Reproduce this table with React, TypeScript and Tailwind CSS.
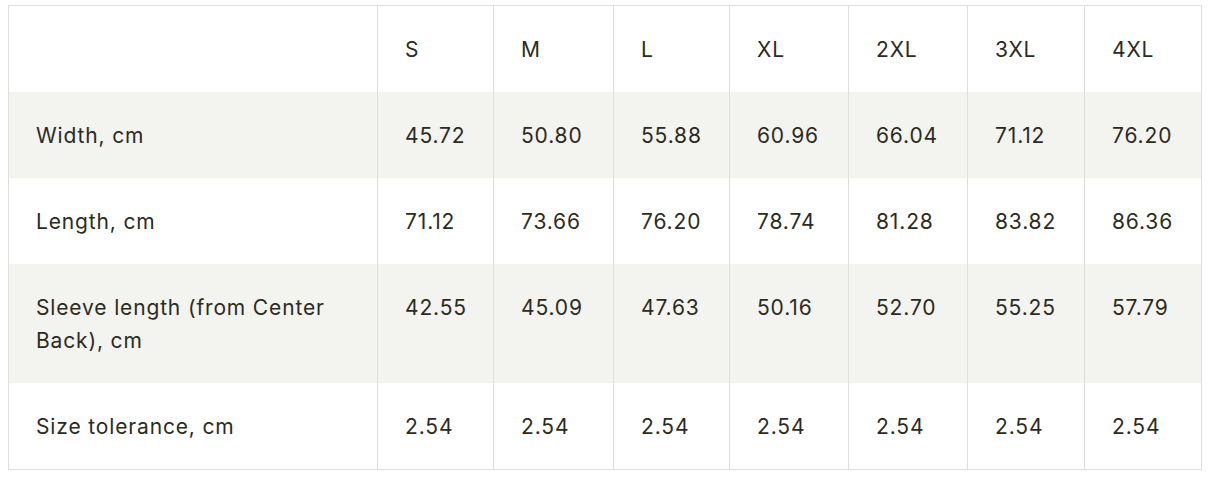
const sizes = ["S", "M", "L", "XL", "2XL", "3XL", "4XL"];

const rows = [
  { label: "Width, cm", values: ["45.72", "50.80", "55.88", "60.96", "66.04", "71.12", "76.20"] },
  { label: "Length, cm", values: ["71.12", "73.66", "76.20", "78.74", "81.28", "83.82", "86.36"] },
  { label: "Sleeve length (from Center Back), cm", values: ["42.55", "45.09", "47.63", "50.16", "52.70", "55.25", "57.79"] },
  { label: "Size tolerance, cm", values: ["2.54", "2.54", "2.54", "2.54", "2.54", "2.54", "2.54"] },
];

const cell = "py-[26.5px] pl-[27px] pr-3 leading-[33px]";

export default function App() {
  return (
    <div className="min-h-screen bg-white pt-[5px] pl-[8px] font-['Inter',sans-serif] text-[21px] tracking-[0.85px] text-[#2b2b1e]">
      <div className="box-border grid w-[1194px] grid-cols-[368px_116px_120px_116px_119px_119px_117px_117px] border border-[#dedfdb]">
        <div className={cell}></div>
        {sizes.map((s) => (
          <div key={s} className={`${cell} border-l border-[#dedfdb]`}>
            {s}
          </div>
        ))}
        {rows.map((row, i) => {
          const bg = i % 2 === 0 ? "bg-[#f3f3ef]" : "bg-white";
          return (
            <div key={row.label} className="contents">
              <div className={`${cell} ${bg} pr-8`}>{row.label}</div>
              {row.values.map((v, j) => (
                <div key={j} className={`${cell} ${bg} border-l border-[#dedfdb]`}>
                  {v}
                </div>
              ))}
            </div>
          );
        })}
      </div>
    </div>
  );
}
